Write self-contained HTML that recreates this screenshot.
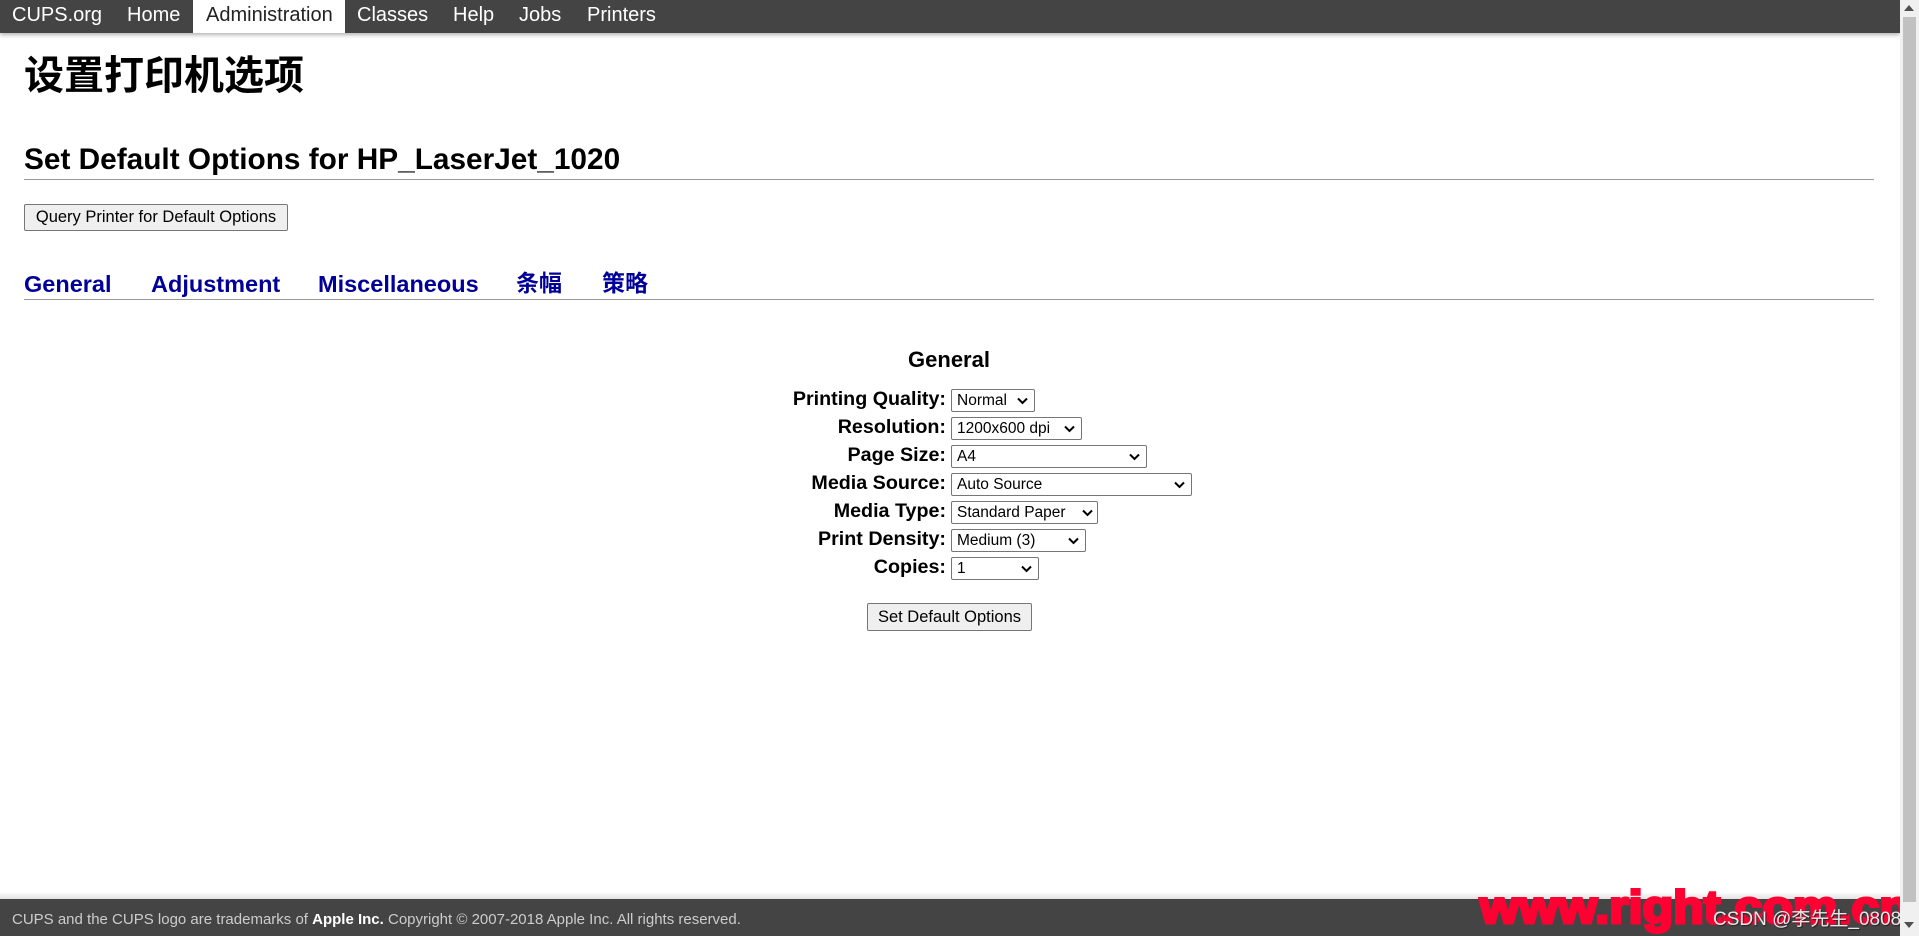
<!DOCTYPE html>
<html><head><meta charset="utf-8">
<style>
*{margin:0;padding:0;box-sizing:border-box}
body{width:1919px;height:936px;overflow:hidden;background:#fff;font-family:"Liberation Sans","Noto Sans CJK SC",sans-serif;position:relative}
.a{position:absolute;white-space:nowrap}
#nav{position:absolute;left:0;top:0;width:1900px;height:33px;background:#444;box-shadow:0 2px 4px rgba(0,0,0,.3)}
#nav span{position:absolute;top:0;height:33px;line-height:30px;font-size:20px;color:#fff}
#nav .act{background:#fff;color:#222;}
.sel{position:absolute;height:23px;border:1px solid #767676;border-radius:2px;background:#fff;font-size:15.5px;line-height:21px;padding-left:5px;color:#000}
.sel svg{position:absolute;right:6px;top:7px}
.lab{position:absolute;right:973px;font-size:19.7px;font-weight:bold;text-align:right;width:300px}
.btn{position:absolute;border:1px solid #767676;background:#efefef;border-radius:2px;font-size:16.5px;text-align:center;color:#000}
.tab{position:absolute;top:270px;font-size:23.5px;font-weight:bold;color:#000099;line-height:28px}
.cjk{top:269px;font-size:23px}
</style></head><body>
<div id="nav">
<span style="left:12px">CUPS.org</span>
<span style="left:127px">Home</span>
<span class="act" style="left:193px;width:152px;padding-left:13px">Administration</span>
<span style="left:357px">Classes</span>
<span style="left:453px">Help</span>
<span style="left:519px">Jobs</span>
<span style="left:587px">Printers</span>
</div>
<div class="a" style="left:24px;top:52px;font-size:40px;font-weight:bold;line-height:48px;color:#000">设置打印机选项</div>
<div class="a" style="left:24px;top:143px;font-size:29.8px;font-weight:bold;line-height:34px">Set Default Options for HP_LaserJet_1020</div>
<div class="a" style="left:24px;top:179px;width:1850px;height:1px;background:#999"></div>
<div class="btn" style="left:24px;top:204px;width:264px;height:27px;line-height:25px">Query Printer for Default Options</div>
<div class="tab" style="left:24px">General</div>
<div class="tab" style="left:151px">Adjustment</div>
<div class="tab" style="left:318px">Miscellaneous</div>
<div class="tab cjk" style="left:516px">条幅</div>
<div class="tab cjk" style="left:602px">策略</div>
<div class="a" style="left:24px;top:299px;width:1850px;height:1px;background:#999"></div>
<div class="a" style="left:849px;width:200px;text-align:center;top:347px;font-size:22px;font-weight:bold">General</div>

<div class="lab" style="top:388px">Printing Quality:</div>
<div class="lab" style="top:416px">Resolution:</div>
<div class="lab" style="top:444px">Page Size:</div>
<div class="lab" style="top:472px">Media Source:</div>
<div class="lab" style="top:500px">Media Type:</div>
<div class="lab" style="top:528px">Print Density:</div>
<div class="lab" style="top:556px">Copies:</div>

<div class="sel" style="left:951px;top:389px;width:84px">Normal<svg width="11" height="8"><path d="M1 1.5L5.5 6L10 1.5" stroke="#000" stroke-width="2" fill="none"/></svg></div>
<div class="sel" style="left:951px;top:417px;width:131px">1200x600 dpi<svg width="11" height="8"><path d="M1 1.5L5.5 6L10 1.5" stroke="#000" stroke-width="2" fill="none"/></svg></div>
<div class="sel" style="left:951px;top:445px;width:196px">A4<svg width="11" height="8"><path d="M1 1.5L5.5 6L10 1.5" stroke="#000" stroke-width="2" fill="none"/></svg></div>
<div class="sel" style="left:951px;top:473px;width:241px">Auto Source<svg width="11" height="8"><path d="M1 1.5L5.5 6L10 1.5" stroke="#000" stroke-width="2" fill="none"/></svg></div>
<div class="sel" style="left:951px;top:501px;width:147px">Standard Paper<svg width="11" height="8" style="right:4px"><path d="M1 1.5L5.5 6L10 1.5" stroke="#000" stroke-width="2" fill="none"/></svg></div>
<div class="sel" style="left:951px;top:529px;width:135px">Medium (3)<svg width="11" height="8"><path d="M1 1.5L5.5 6L10 1.5" stroke="#000" stroke-width="2" fill="none"/></svg></div>
<div class="sel" style="left:951px;top:557px;width:88px">1<svg width="11" height="8"><path d="M1 1.5L5.5 6L10 1.5" stroke="#000" stroke-width="2" fill="none"/></svg></div>

<div class="btn" style="left:867px;top:603px;width:165px;height:28px;line-height:26px">Set Default Options</div>

<div class="a" style="left:0;top:892px;width:1900px;height:8px;background:linear-gradient(#fff,#ddd)"></div>
<div class="a" style="left:0;top:899px;width:1900px;height:37px;background:#444"></div>
<div class="a" style="left:12px;top:911px;font-size:15px;color:#ccc">CUPS and the CUPS logo are trademarks of <b style="color:#fff">Apple Inc.</b> Copyright © 2007-2018 Apple Inc. All rights reserved.</div>
<svg class="a" style="left:1478px;top:880px" width="436" height="56"><text x="2" y="43" textLength="430" lengthAdjust="spacingAndGlyphs" font-family="Liberation Sans" font-weight="bold" font-size="46" fill="#ff0033" stroke="#ff0033" stroke-width="3">www.right.com.cn</text></svg>
<div class="a" style="left:1713px;top:904px;font-size:19px;color:#e8e8e8;text-shadow:1px 1px 1px #222">CSDN @李先生_0808</div>
<div class="a" style="left:1900px;top:0;width:19px;height:936px;background:#f0f0f0"></div>
<div class="a" style="left:1903px;top:17px;width:13px;height:885px;background:#c1c1c1"></div>
<svg class="a" style="left:1904px;top:922px" width="11" height="8"><path d="M0 0H10L5 6Z" fill="#505050"/></svg>
<svg class="a" style="left:1904px;top:5px" width="11" height="8"><path d="M0 6H10L5 0Z" fill="#505050"/></svg>
</body></html>
